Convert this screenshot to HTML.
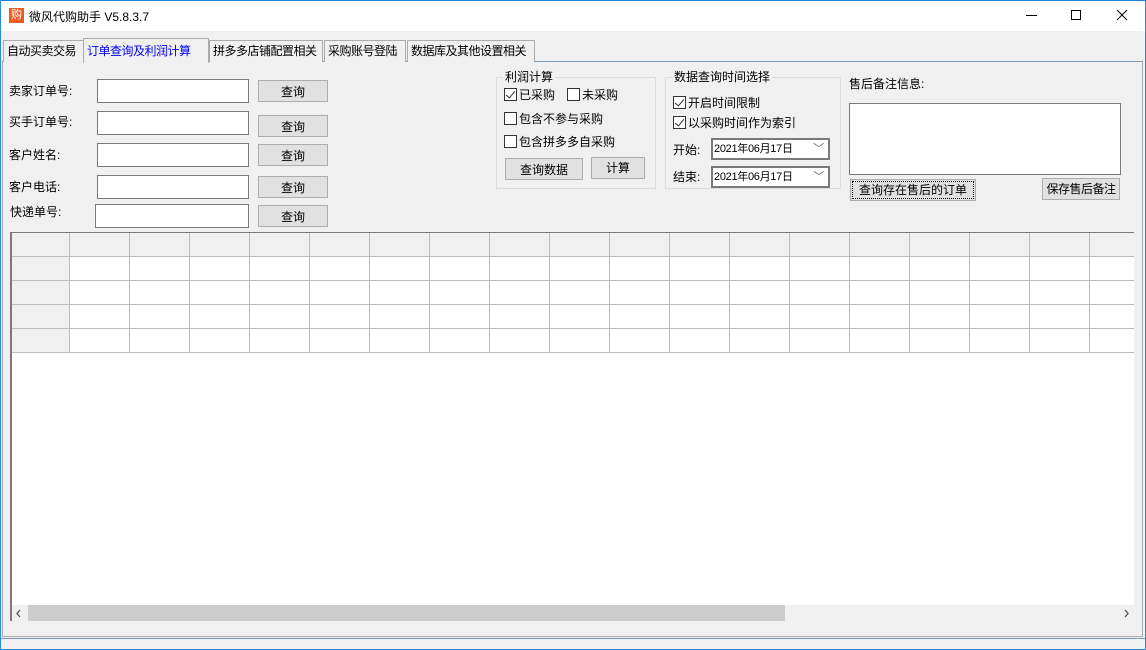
<!DOCTYPE html>
<html><head><meta charset="utf-8"><style>
*{box-sizing:border-box;margin:0;padding:0}
body{width:1146px;height:650px;overflow:hidden;background:#f0f0f0;font-family:"Liberation Sans","Noto Sans CJK SC",sans-serif;font-size:12px;color:#000;position:relative}
div{white-space:nowrap}
.a{position:absolute}
.t{position:absolute;font-size:12px;line-height:14px}
.inp{position:absolute;background:#fff;border:1px solid #7a7a7a}
.btn{position:absolute;background:#e1e1e1;border:1px solid #adadad;text-align:center;font-size:12px}
.cb{position:absolute;width:13px;height:13px;border:1px solid #333;background:#fff}
.cb.c::after{content:"";position:absolute;left:3px;top:0px;width:4px;height:8px;border:solid #333;border-width:0 1.5px 1.5px 0;transform:rotate(40deg)}
.tab{position:absolute;top:40px;height:22px;border:1px solid #acacac;border-bottom:none;background:#f0f0f0;font-size:12px;line-height:20px;padding:0 3px;letter-spacing:-0.5px}
.grp{position:absolute;border:1px solid #dcdcdc}
.lg{position:absolute;top:-8px;left:6px;background:#f0f0f0;padding:0 2px;font-size:12px;line-height:14px}
</style></head><body>
<div class="a" style="left:0;top:0;width:1146px;height:31px;background:#fff;border-top:1px solid #1e7fd6"></div>
<div class="a" style="left:9px;top:8px;width:15px;height:15px;background:#f05a22;color:#fff;font-size:11px;line-height:15px;text-align:center">购</div>
<div class="a" style="left:29px;top:8px;font-size:12px">微风代购助手 V5.8.3.7</div>
<div class="a" style="left:1026px;top:15px;width:11px;height:1px;background:#000"></div>
<div class="a" style="left:1071px;top:10px;width:10px;height:10px;border:1px solid #000"></div>
<svg class="a" style="left:1116px;top:9px" width="12" height="12"><path d="M1 1L11 11M11 1L1 11" stroke="#000" stroke-width="1"/></svg>
<div class="a" style="left:0;top:0;width:1px;height:650px;background:#2a8be0"></div>
<div class="a" style="left:1145px;top:0;width:1px;height:650px;background:#2a8be0"></div>
<div class="a" style="left:0;top:649px;width:1146px;height:1px;background:#2a8be0"></div>
<div class="a" style="left:2px;top:61px;width:1141px;height:576px;border:1px solid #acacac;border-top-color:#7a9ab8"></div>
<div class="tab" style="left:3px;width:81px">自动买卖交易</div>
<div class="tab" style="left:209px;width:114px">拼多多店铺配置相关</div>
<div class="tab" style="left:324px;width:82px">采购账号登陆</div>
<div class="tab" style="left:407px;width:128px">数据库及其他设置相关</div>
<div class="tab" style="left:83px;top:38px;height:25px;width:126px;color:#0000ff;line-height:24px">订单查询及利润计算</div>
<div class="t" style="left:9px;top:84px">卖家订单号:</div>
<div class="t" style="left:9px;top:115px">买手订单号:</div>
<div class="t" style="left:9px;top:148px">客户姓名:</div>
<div class="t" style="left:9px;top:180px">客户电话:</div>
<div class="t" style="left:10px;top:205px">快递单号:</div>
<div class="inp" style="left:97px;top:79px;width:152px;height:24px"></div>
<div class="inp" style="left:97px;top:111px;width:152px;height:24px"></div>
<div class="inp" style="left:97px;top:143px;width:152px;height:24px"></div>
<div class="inp" style="left:97px;top:175px;width:152px;height:24px"></div>
<div class="inp" style="left:95px;top:204px;width:154px;height:24px"></div>
<div class="btn" style="left:258px;top:80px;width:70px;height:22px;line-height:22px">查询</div>
<div class="btn" style="left:258px;top:115px;width:70px;height:22px;line-height:22px">查询</div>
<div class="btn" style="left:258px;top:144px;width:70px;height:22px;line-height:22px">查询</div>
<div class="btn" style="left:258px;top:176px;width:70px;height:22px;line-height:22px">查询</div>
<div class="btn" style="left:258px;top:205px;width:70px;height:22px;line-height:22px">查询</div>
<div class="grp" style="left:496px;top:77px;width:160px;height:112px"><div class="lg">利润计算</div></div>
<div class="cb c" style="left:504px;top:88px"></div><div class="t" style="left:519px;top:88px">已采购</div>
<div class="cb" style="left:567px;top:88px"></div><div class="t" style="left:582px;top:88px">未采购</div>
<div class="cb" style="left:504px;top:112px"></div><div class="t" style="left:519px;top:112px">包含不参与采购</div>
<div class="cb" style="left:504px;top:135px"></div><div class="t" style="left:519px;top:135px">包含拼多多自采购</div>
<div class="btn" style="left:505px;top:158px;width:78px;height:22px;line-height:22px">查询数据</div>
<div class="btn" style="left:591px;top:157px;width:54px;height:22px;line-height:20px">计算</div>
<div class="grp" style="left:665px;top:77px;width:176px;height:112px"><div class="lg">数据查询时间选择</div></div>
<div class="cb c" style="left:673px;top:96px"></div><div class="t" style="left:688px;top:96px">开启时间限制</div>
<div class="cb c" style="left:673px;top:116px"></div><div class="t" style="left:688px;top:116px">以采购时间作为索引</div>
<div class="t" style="left:673px;top:143px">开始:</div>
<div class="t" style="left:673px;top:170px">结束:</div>
<div class="inp" style="left:711px;top:138px;width:119px;height:22px;border:2px solid #7a7a7a;font-size:11px;padding:1px 1px;line-height:16px;letter-spacing:-0.3px">2021年06月17日<span style="position:absolute;right:4px;top:1px;color:#666">﹀</span></div>
<div class="inp" style="left:711px;top:166px;width:119px;height:22px;border:2px solid #7a7a7a;font-size:11px;padding:1px 1px;line-height:16px;letter-spacing:-0.3px">2021年06月17日<span style="position:absolute;right:4px;top:1px;color:#666">﹀</span></div>
<div class="t" style="left:849px;top:77px">售后备注信息:</div>
<div class="inp" style="left:849px;top:103px;width:272px;height:72px"></div>
<div class="btn" style="left:850px;top:179px;width:126px;height:22px;line-height:20px;outline:1px dotted #000;outline-offset:-3px">查询存在售后的订单</div>
<div class="btn" style="left:1042px;top:178px;width:78px;height:22px;line-height:20px;letter-spacing:-0.5px">保存售后备注</div>
<div class="a" style="left:10px;top:232px;width:1124px;height:389px;background:#fff;border-left:2px solid #7a7a7a;border-top:1px solid #7a7a7a;overflow:hidden">
 <div class="a" style="left:0;top:0;width:1122px;height:24px;background:#f0f0f0"></div>
 <div class="a" style="left:0;top:24px;width:57px;height:96px;background:#f0f0f0"></div>
 <svg class="a" style="left:0;top:0" width="1122" height="121"><g stroke="#bcbcbc" stroke-width="1">
 <path d="M57.5 0V120M117.5 0V120M177.5 0V120M237.5 0V120M297.5 0V120M357.5 0V120M417.5 0V120M477.5 0V120M537.5 0V120M597.5 0V120M657.5 0V120M717.5 0V120M777.5 0V120M837.5 0V120M897.5 0V120M957.5 0V120M1017.5 0V120M1077.5 0V120"/>
 <path d="M0 23.5H1122M0 47.5H1122M0 71.5H1122M0 95.5H1122M0 119.5H1122"/></g></svg>
 <div class="a" style="left:0;top:372px;width:1122px;height:16px;background:#f0f0f0"></div>
 <div class="a" style="left:16px;top:372px;width:757px;height:16px;background:#cdcdcd"></div>
 <svg class="a" style="left:3px;top:376px" width="8" height="9"><path d="M5 1L2 4.5L5 8" stroke="#555" fill="none" stroke-width="1.3"/></svg>
 <svg class="a" style="left:1110px;top:376px" width="8" height="9"><path d="M3 1L6 4.5L3 8" stroke="#555" fill="none" stroke-width="1.3"/></svg>
</div>
<div class="a" style="left:1px;top:638px;width:1144px;height:1px;background:#7a9ab8"></div>
</body></html>
